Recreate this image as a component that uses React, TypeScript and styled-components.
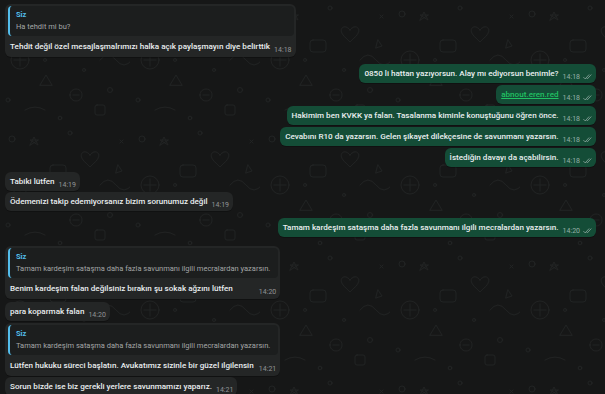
import React from "react";
import styled, { createGlobalStyle } from "styled-components";

const Global = createGlobalStyle`
  html, body { margin: 0; padding: 0; background: #161717; }
  body { font-family: Roboto, "Liberation Sans", Arial, sans-serif; -webkit-font-smoothing: antialiased; }
`;

const Page = styled.div`
  position: relative;
  width: 605px;
  height: 394px;
  overflow: hidden;
  background: #161717;
`;

const Wallpaper = styled.svg`
  position: absolute;
  inset: 0;
  width: 100%;
  height: 100%;
`;

const Chat = styled.div`
  position: relative;
  display: flex;
  flex-direction: column;
  padding: 4px 9px 0 5px;
`;

const Row = styled.div<{ $out?: boolean; $gap: number }>`
  display: flex;
  justify-content: ${(p) => (p.$out ? "flex-end" : "flex-start")};
  margin-top: ${(p) => p.$gap}px;
`;

const Bubble = styled.div<{ $out?: boolean; $quoted?: boolean }>`
  display: flex;
  flex-direction: column;
  background: ${(p) => (p.$out ? "#144d37" : "#242626")};
  border-radius: 6px;
  padding: ${(p) => (p.$quoted ? "2px 2px 1px 3px" : "0 4px 0 5px")};
  box-shadow: 0 1px 0.5px rgba(0, 0, 0, 0.25);
`;

const Quote = styled.div`
  display: flex;
  flex-direction: column;
  background: #1c1e1e;
  border-left: 2.5px solid #53bdeb;
  border-radius: 4px;
  padding: 4px 8px 4px 6px;
`;

const QuoteName = styled.div`
  color: #53bdeb;
  font-size: 7.5px;
  font-weight: 700;
  line-height: 9px;
`;

const QuoteText = styled.div`
  color: #a3a6a6;
  font-size: 7.5px;
  line-height: 11px;
  margin-top: 2px;
  white-space: nowrap;
`;

const Content = styled.div<{ $quoted?: boolean }>`
  display: flex;
  align-items: flex-end;
  gap: 4px;
  padding: ${(p) => (p.$quoted ? "0 2px 0 2px" : "0")};
  margin-top: ${(p) => (p.$quoted ? "1px" : "0")};
`;

const Text = styled.span`
  flex: 1;
  color: #e9edef;
  font-size: 8.1px;
  font-weight: 500;
  line-height: 11px;
  padding: 4px 0;
  white-space: nowrap;
`;

const Link = styled.a`
  color: #21c063;
  text-decoration: underline;
`;

const Meta = styled.span<{ $out?: boolean }>`
  display: flex;
  align-items: center;
  gap: 3px;
  color: ${(p) => (p.$out ? "rgba(233, 237, 239, 0.6)" : "rgba(233, 237, 239, 0.55)")};
  font-size: 7px;
  line-height: 8px;
  padding-bottom: 2px;
  white-space: nowrap;
`;

const Ticks = () => (
  <svg width="9" height="6" viewBox="0 0 16 11" fill="none" stroke="rgba(233,237,239,0.6)" strokeWidth="1.4" strokeLinecap="round" strokeLinejoin="round">
    <path d="M1 6.2 L3.8 9 L10.5 1.5" />
    <path d="M7.2 8.6 L7.6 9 L14.5 1.5" />
  </svg>
);

type Msg = {
  out?: boolean;
  gap: number;
  text: React.ReactNode;
  time: string;
  quote?: string;
};

const messages: Msg[] = [
  { gap: 0, quote: "Ha tehdit mi bu?", text: "Tehdit değil özel mesajlaşmalrımızı halka açık paylaşmayın diye belirttik", time: "14:18" },
  { out: true, gap: 7, text: "0850 li hattan yazıyorsun. Alay mı ediyorsun benimle?", time: "14:18" },
  { out: true, gap: 2, text: <Link>abnout.eren.red</Link>, time: "14:18" },
  { out: true, gap: 2, text: "Hakimim ben KVKK ya falan. Tasalanma kiminle konuştuğunu öğren önce.", time: "14:18" },
  { out: true, gap: 2, text: "Cevabını R10 da yazarsın. Gelen şikayet dilekçesine de savunmanı yazarsın.", time: "14:18" },
  { out: true, gap: 2, text: "İstediğin davayı da açabilirsin.", time: "14:18" },
  { gap: 5, text: "Tabiki lütfen", time: "14:19" },
  { gap: 1, text: "Ödemenizi takip edemiyorsanız bizim sorunumuz değil", time: "14:19" },
  { out: true, gap: 7, text: "Tamam kardeşim sataşma daha fazla savunmanı ilgili mecralardan yazarsın.", time: "14:20" },
  { gap: 9, quote: "Tamam kardeşim sataşma daha fazla savunmanı ilgili mecralardan yazarsın.", text: "Benim kardeşim falan değilsiniz bırakın şu sokak ağzını lütfen", time: "14:20" },
  { gap: 3, text: "para koparmak falan", time: "14:20" },
  { gap: 2, quote: "Tamam kardeşim sataşma daha fazla savunmanı ilgili mecralardan yazarsın.", text: "Lütfen hukuku süreci başlatın. Avukatımız sizinle bir güzel ilgilensin", time: "14:21" },
  { gap: 1, text: "Sorun bizde ise biz gerekli yerlere savunmamızı yaparız.", time: "14:21" },
];

const Doodles = () => (
  <g fill="none" stroke="#212424" strokeWidth="0.9" strokeLinecap="round" strokeLinejoin="round">
    <circle cx="12" cy="14" r="3" />
    <circle cx="70" cy="8" r="2" />
    <path d="M30 20 l4 -8 l4 8 l-8 -5 h8 z" />
    <path d="M90 30 c-6 -8 -14 0 -4 8 l4 4 l4 -4 c10 -8 2 -16 -4 -8 z" />
    <rect x="50" y="40" width="16" height="12" rx="3" />
    <circle cx="20" cy="60" r="9" />
    <path d="M14 60 h12 M20 54 v12" />
    <path d="M100 60 q8 -10 16 0 t16 0" />
    <circle cx="110" cy="90" r="2.5" />
    <path d="M40 85 l6 -10 l6 10 z" />
    <path d="M70 95 c0 -8 12 -8 12 0 c0 8 -12 8 -12 0 z M73 95 h6" />
    <circle cx="8" cy="100" r="2" />
    <path d="M120 15 l3 3 m0 -3 l-3 3" />
    <rect x="95" y="105" width="10" height="10" rx="2" />
    <path d="M25 110 q10 -6 20 0" />
    <circle cx="60" cy="118" r="1.8" />
    <circle cx="84" cy="70" r="1.5" />
    <path d="M118 40 l4 6 l-6 2 z" />
    <circle cx="45" cy="60" r="1.5" />
  </g>
);

export default function App() {
  return (
    <Page>
      <Global />
      <Wallpaper>
        <defs>
          <pattern id="wp" width="130" height="125" patternUnits="userSpaceOnUse">
            <Doodles />
          </pattern>
        </defs>
        <rect width="100%" height="100%" fill="url(#wp)" />
      </Wallpaper>
      <Chat>
        {messages.map((m, i) => (
          <Row key={i} $out={m.out} $gap={m.gap}>
            <Bubble $out={m.out} $quoted={!!m.quote}>
              {m.quote && (
                <Quote>
                  <QuoteName>Siz</QuoteName>
                  <QuoteText>{m.quote}</QuoteText>
                </Quote>
              )}
              <Content $quoted={!!m.quote}>
                <Text>{m.text}</Text>
                <Meta $out={m.out}>
                  {m.time}
                  {m.out && <Ticks />}
                </Meta>
              </Content>
            </Bubble>
          </Row>
        ))}
      </Chat>
    </Page>
  );
}
